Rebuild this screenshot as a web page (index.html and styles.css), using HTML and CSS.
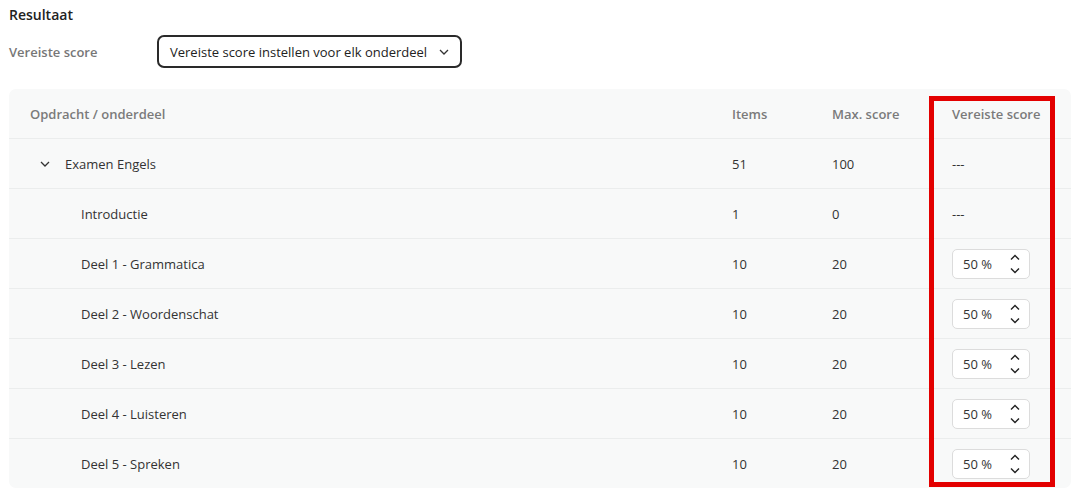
FILE: index.html
```html
<!DOCTYPE html>
<html lang="nl">
<head>
<meta charset="utf-8">
<link rel="stylesheet" href="styles.css">
</head>
<body>
<div class="page">
  <h2 class="title">Resultaat</h2>
  <div class="setting">
    <span class="setting-label">Vereiste score</span>
    <div class="select">
      <span>Vereiste score instellen voor elk onderdeel</span>
      <svg class="chev" width="10" height="6" viewBox="0 0 10 6"><path d="M1 1l4 4 4-4" fill="none" stroke="#333" stroke-width="1.3"/></svg>
    </div>
  </div>
  <div class="card">
    <div class="row head">
      <div>Opdracht / onderdeel</div><div>Items</div><div>Max. score</div><div>Vereiste score</div>
    </div>
    <div class="row">
      <div class="name parent"><svg class="tog" width="10" height="6" viewBox="0 0 10 6"><path d="M1 1l4 4 4-4" fill="none" stroke="#333" stroke-width="1.3"/></svg>Examen Engels</div><div>51</div><div>100</div><div>---</div>
    </div>
    <div class="row">
      <div class="name child">Introductie</div><div>1</div><div>0</div><div>---</div>
    </div>
    <div class="row">
      <div class="name child">Deel 1 - Grammatica</div><div>10</div><div>20</div>
      <div><div class="num"><span>50 %</span><span class="spin"><svg width="10" height="22" viewBox="0 0 10 22"><path d="M1 6.5l4-4 4 4M1 15.5l4 4 4-4" fill="none" stroke="#222" stroke-width="1.4"/></svg></span></div></div>
    </div>
    <div class="row">
      <div class="name child">Deel 2 - Woordenschat</div><div>10</div><div>20</div>
      <div><div class="num"><span>50 %</span><span class="spin"><svg width="10" height="22" viewBox="0 0 10 22"><path d="M1 6.5l4-4 4 4M1 15.5l4 4 4-4" fill="none" stroke="#222" stroke-width="1.4"/></svg></span></div></div>
    </div>
    <div class="row">
      <div class="name child">Deel 3 - Lezen</div><div>10</div><div>20</div>
      <div><div class="num"><span>50 %</span><span class="spin"><svg width="10" height="22" viewBox="0 0 10 22"><path d="M1 6.5l4-4 4 4M1 15.5l4 4 4-4" fill="none" stroke="#222" stroke-width="1.4"/></svg></span></div></div>
    </div>
    <div class="row">
      <div class="name child">Deel 4 - Luisteren</div><div>10</div><div>20</div>
      <div><div class="num"><span>50 %</span><span class="spin"><svg width="10" height="22" viewBox="0 0 10 22"><path d="M1 6.5l4-4 4 4M1 15.5l4 4 4-4" fill="none" stroke="#222" stroke-width="1.4"/></svg></span></div></div>
    </div>
    <div class="row">
      <div class="name child">Deel 5 - Spreken</div><div>10</div><div>20</div>
      <div><div class="num"><span>50 %</span><span class="spin"><svg width="10" height="22" viewBox="0 0 10 22"><path d="M1 6.5l4-4 4 4M1 15.5l4 4 4-4" fill="none" stroke="#222" stroke-width="1.4"/></svg></span></div></div>
    </div>
    <div class="highlight"></div>
  </div>
</div>
</body>
</html>
```

FILE: styles.css
```css
html, body { margin: 0; padding: 0; background: #fff; }
body { font-family: "Open Sans", "Noto Sans", sans-serif; font-size: 13px; color: #333; }
.page { padding: 4px 7px 0 9px; }
.title { margin: 0; font-size: 14px; font-weight: 600; color: #222; line-height: 22px; }
.setting { display: flex; align-items: center; margin-top: 9px; }
.setting-label { width: 148px; color: #777; font-weight: 600; }
.select {
  display: flex; align-items: center; gap: 10px;
  height: 29px; padding: 0 11px 0 11px;
  border: 2px solid #2a2a2a; border-radius: 7px; background: #fff; color: #222;
}
.chev { margin-left: 2px; }
.card {
  position: relative; margin-top: 21px; background: #f8f9f9; border-radius: 7px;
  width: 1062px;
}
.row {
  display: grid; grid-template-columns: 702px 100px 120px 1fr;
  height: 50px; align-items: center; padding-left: 21px;
  border-top: 1px solid #ebeded; box-sizing: border-box;
}
.row.head { border-top: none; height: 49px; color: #7b7b7b; font-weight: 600; }
.name.parent { display: flex; align-items: center; padding-left: 10px; }
.tog { margin-right: 15px; }
.name.child { padding-left: 51px; }
.num {
  display: flex; align-items: center; justify-content: space-between;
  width: 78px; height: 30px; box-sizing: border-box;
  padding: 0 9px 0 10px; background: #fff;
  border: 1px solid #dcdcdc; border-radius: 5px;
}
.spin { display: flex; }
.highlight {
  position: absolute; left: 920px; top: 7px; width: 126px; height: 391px;
  border: 5px solid #e30000; box-sizing: border-box;
}
```
